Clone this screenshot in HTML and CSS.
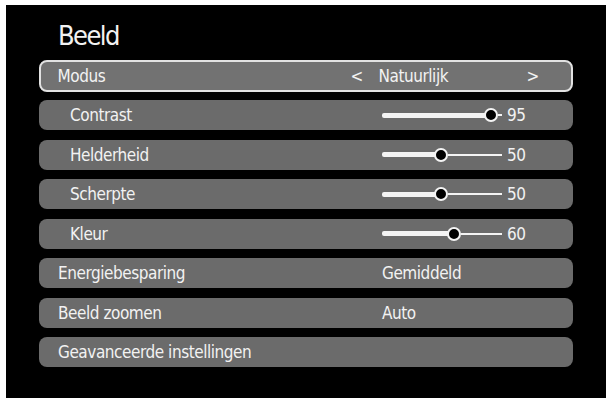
FILE: index.html
```html
<!DOCTYPE html>
<html>
<head>
<meta charset="utf-8">
<link rel="stylesheet" href="styles.css">
</head>
<body>
<div class="screen">
  <h1 class="title">Beeld</h1>
  <div class="menu">
    <div class="row selected">
      <span class="label">Modus</span>
      <span class="arrow">&lt;</span>
      <span class="mode">Natuurlijk</span>
      <span class="arrow">&gt;</span>
    </div>
    <div class="row sub">
      <span class="label">Contrast</span>
      <span class="slider"><span class="fill" style="width:109px"></span><span class="knob" style="left:109px"></span><span class="rest"></span></span>
      <span class="num">95</span>
    </div>
    <div class="row sub">
      <span class="label">Helderheid</span>
      <span class="slider"><span class="fill" style="width:59px"></span><span class="knob" style="left:59px"></span><span class="rest"></span></span>
      <span class="num">50</span>
    </div>
    <div class="row sub">
      <span class="label">Scherpte</span>
      <span class="slider"><span class="fill" style="width:59px"></span><span class="knob" style="left:59px"></span><span class="rest"></span></span>
      <span class="num">50</span>
    </div>
    <div class="row sub">
      <span class="label">Kleur</span>
      <span class="slider"><span class="fill" style="width:72px"></span><span class="knob" style="left:72px"></span><span class="rest"></span></span>
      <span class="num">60</span>
    </div>
    <div class="row">
      <span class="label">Energiebesparing</span>
      <span class="value">Gemiddeld</span>
    </div>
    <div class="row">
      <span class="label">Beeld zoomen</span>
      <span class="value">Auto</span>
    </div>
    <div class="row">
      <span class="label">Geavanceerde instellingen</span>
    </div>
  </div>
</div>
</body>
</html>
```

FILE: styles.css
```css
html, body {
  margin: 0;
  padding: 0;
  background: #ffffff;
}

body {
  font-family: "DejaVu Sans Condensed", "Liberation Sans", sans-serif;
  font-stretch: condensed;
  color: #f2f2f2;
}

.screen {
  box-sizing: border-box;
  width: 600px;
  height: 393px;
  margin: 5px 0 0 6px;
  background: #000000;
  padding: 17px 0 0 33px;
}

.title {
  margin: 0 0 0 19px;
  height: 38px;
  font-size: 27px;
  font-weight: normal;
  line-height: 28px;
  letter-spacing: -1.6px;
}

.menu {
  display: flex;
  flex-direction: column;
  gap: 9.5px;
  width: 534px;
}

.row {
  box-sizing: border-box;
  height: 30px;
  display: flex;
  align-items: center;
  background: #6b6b6b;
  border-radius: 8px;
  padding-left: 19px;
  font-size: 17px;
  letter-spacing: -0.45px;
}

.row .label {
  width: 324px;
  flex: none;
  white-space: nowrap;
}

.row.sub {
  padding-left: 31px;
}

.row.sub .label {
  width: 312px;
}

.row.selected {
  height: 32px;
  margin-bottom: -1.5px;
  border: 2.5px solid #e2e2e2;
  padding-left: 16.5px;
  background: #727272;
}

.row.selected .label {
  width: 293px;
}

.arrow {
  width: 28px;
  flex: none;
}

.mode {
  width: 148px;
  flex: none;
}

.slider {
  position: relative;
  width: 120px;
  height: 14px;
  flex: none;
  display: flex;
  align-items: center;
}

.fill {
  flex: none;
  height: 5px;
  background: #f4f4f4;
  border-radius: 2px;
}

.rest {
  flex: 1;
  height: 2px;
  margin-left: 7px;
  background: #f4f4f4;
}

.knob {
  position: absolute;
  top: 0;
  box-sizing: border-box;
  width: 14px;
  height: 14px;
  margin-left: -7px;
  border-radius: 50%;
  background: #000000;
  border: 2.5px solid #f4f4f4;
}

.num {
  margin-left: 5px;
}
```
